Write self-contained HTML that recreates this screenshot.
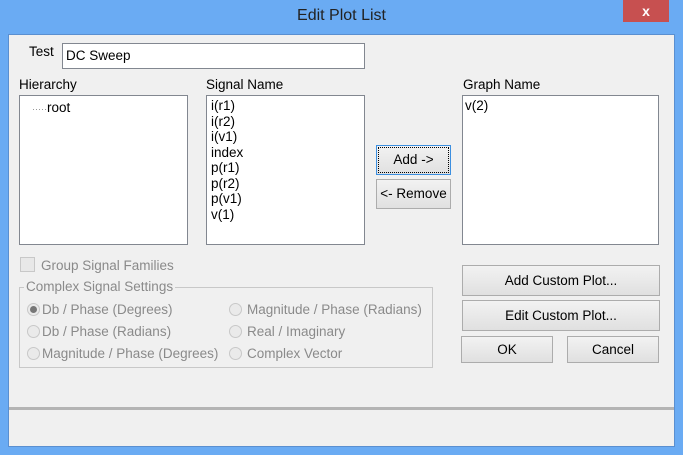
<!DOCTYPE html>
<html><head><style>
*{margin:0;padding:0;box-sizing:border-box}
body{width:683px;height:455px;background:#6aabf3;font-family:"Liberation Sans",sans-serif;font-size:13.5px;color:#000;position:relative;overflow:hidden}
.abs{position:absolute;white-space:nowrap}
.client{left:8px;top:34px;width:667px;height:413px;background:#f0f0f0;border:1px solid #5a8fd0}
.title{left:0;top:7px;width:683px;text-align:center;font-size:16px;color:#222}
.close{left:623px;top:0;width:46px;height:22px;background:#c75050;color:#fff;text-align:center;font-size:14px;font-weight:bold;line-height:22px}
.box{background:#fff;border:1px solid #828790}
.btn{background:linear-gradient(#f2f2f2,#e0e0e0);border:1px solid #acacac;text-align:center}
.dis{color:#8a8a8a}
.radio{width:13px;height:13px;border-radius:50%;border:1px solid #c8c8c8;background:#eaeaea}
</style></head><body>
<div class="abs title">Edit Plot List</div>
<div class="abs close">x</div>
<div class="abs client"></div>
<div class="abs" style="left:29px;top:44px">Test</div>
<div class="abs box" style="left:62px;top:43px;width:303px;height:26px;padding:4px 3px">DC Sweep</div>
<div class="abs" style="left:19px;top:77px">Hierarchy</div>
<div class="abs" style="left:206px;top:77px">Signal Name</div>
<div class="abs" style="left:463px;top:77px">Graph Name</div>
<div class="abs box" style="left:19px;top:95px;width:169px;height:150px"><div style="position:absolute;left:12px;top:4px"><span style="color:#888;font-size:9px">·····</span>root</div></div>
<div class="abs box" style="left:206px;top:95px;width:159px;height:150px;padding:2px 4px;line-height:15.5px">i(r1)<br>i(r2)<br>i(v1)<br>index<br>p(r1)<br>p(r2)<br>p(v1)<br>v(1)</div>
<div class="abs box" style="left:462px;top:95px;width:197px;height:150px;padding:2px 2px;line-height:15.5px">v(2)</div>
<div class="abs btn" style="left:376px;top:145px;width:75px;height:30px;border:1px solid #3c8fe0;padding-top:1px"><div style="border:1px dotted #000;height:26px;line-height:24px;margin:0 1px">Add -&gt;</div></div>
<div class="abs btn" style="left:376px;top:179px;width:75px;height:30px;line-height:28px">&lt;- Remove</div>
<div class="abs" style="left:20px;top:257px;width:15px;height:15px;border:1px solid #c8c8c8;background:#e8e8e8"></div>
<div class="abs dis" style="left:41px;top:258px">Group Signal Families</div>
<div class="abs" style="left:19px;top:287px;width:414px;height:81px;border:1px solid #c8c8c8"></div>
<div class="abs dis" style="left:24px;top:279px;background:#f0f0f0;padding:0 2px">Complex Signal Settings</div>
<div class="abs radio" style="left:27px;top:303px"><div style="width:7px;height:7px;border-radius:50%;background:#777;margin:2px"></div></div>
<div class="abs dis" style="left:42px;top:302px">Db / Phase (Degrees)</div>
<div class="abs radio" style="left:27px;top:325px"></div>
<div class="abs dis" style="left:42px;top:324px">Db / Phase (Radians)</div>
<div class="abs radio" style="left:27px;top:347px"></div>
<div class="abs dis" style="left:42px;top:346px">Magnitude / Phase (Degrees)</div>
<div class="abs radio" style="left:229px;top:303px"></div>
<div class="abs dis" style="left:247px;top:302px">Magnitude / Phase (Radians)</div>
<div class="abs radio" style="left:229px;top:325px"></div>
<div class="abs dis" style="left:247px;top:324px">Real / Imaginary</div>
<div class="abs radio" style="left:229px;top:347px"></div>
<div class="abs dis" style="left:247px;top:346px">Complex Vector</div>
<div class="abs btn" style="left:462px;top:265px;width:198px;height:31px;line-height:29px">Add Custom Plot...</div>
<div class="abs btn" style="left:462px;top:300px;width:198px;height:31px;line-height:29px">Edit Custom Plot...</div>
<div class="abs btn" style="left:461px;top:336px;width:92px;height:27px;line-height:25px">OK</div>
<div class="abs btn" style="left:567px;top:336px;width:92px;height:27px;line-height:25px">Cancel</div>
<div class="abs" style="left:9px;top:407px;width:665px;height:3px;background:#b4b4b4"></div>
</body></html>
